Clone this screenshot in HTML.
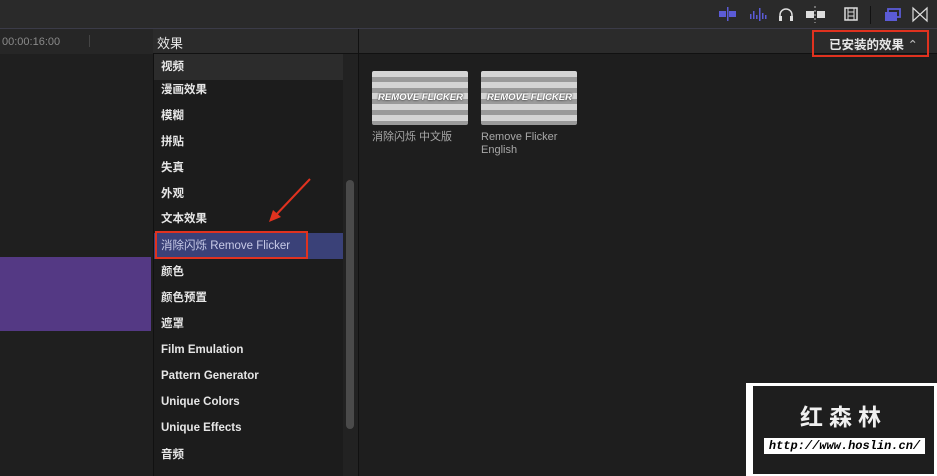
<!DOCTYPE html>
<html><head><meta charset="utf-8"><style>
*{margin:0;padding:0;box-sizing:border-box}
body{width:937px;height:476px;overflow:hidden;background:#1e1e1e;font-family:"Liberation Sans","Noto Sans CJK SC",sans-serif;position:relative;color:#ddd}
.abs{position:absolute}
#top{left:0;top:0;width:937px;height:29px;background:#2a2a2a;border-bottom:1px solid #3b3b48}
#left{left:0;top:29px;width:153px;height:447px;background:#1f1f1f}
#tc{left:0;top:29px;width:153px;height:25px;background:#262626;font-size:11px;color:#8a8a8a;padding:7px 0 0 2px}
#clip{left:0;top:257px;width:151px;height:74px;background:#543984}
#side{left:153px;top:29px;width:205px;height:447px;background:#1c1c1c;border-left:1px solid #111}
#hdr{left:153px;top:29px;width:784px;height:25px;background:#2b2b2b;border-bottom:1px solid #111}
.row{position:absolute;left:154px;width:189px;height:26px;font-size:11.5px;color:#e6e6e6;padding-left:7px;line-height:27px;font-weight:bold}
.sel{background:#3a4178;color:#c8cbe8;font-weight:normal}
.th{position:absolute;top:71px;width:96px;height:54px;border-radius:2px;background:repeating-linear-gradient(180deg,#d4d4d4 0 6px,#9a9a9a 6px 11px);overflow:hidden}
.th span{position:absolute;left:6px;top:21px;font:italic bold 9.5px "Liberation Sans",sans-serif;color:#fff;white-space:nowrap;text-shadow:0 0 2px #000}
.lbl{position:absolute;top:131px;font-size:11px;color:#a8a8a8;line-height:13px}
</style></head><body>
<div id="top" class="abs"></div>
<svg class="abs" style="left:717px;top:6px" width="220" height="18">
<rect x="2" y="5" width="7" height="6" fill="#5b5bd6"/><rect x="12" y="5" width="7" height="6" fill="#5b5bd6"/><rect x="10" y="1" width="1.5" height="14" fill="#5b5bd6"/>
<g fill="#5b5bd6"><rect x="33" y="8" width="1.5" height="5"/><rect x="36" y="5" width="1.5" height="8"/><rect x="39" y="9" width="1.5" height="4"/><rect x="42" y="2" width="1.5" height="13"/><rect x="45" y="7" width="1.5" height="6"/><rect x="48" y="9" width="1.5" height="4"/></g>
<path d="M63 14 V9 a6 6 0 0 1 12 0 V14" stroke="#ddd" stroke-width="1.5" fill="none"/><rect x="62" y="10" width="3" height="5" fill="#ddd"/><rect x="73" y="10" width="3" height="5" fill="#ddd"/>
<rect x="89" y="5" width="8" height="7" fill="#ddd"/><rect x="100" y="5" width="8" height="7" fill="#ddd"/><path d="M98 0 V17" stroke="#bbb" stroke-dasharray="2 2"/>
<rect x="128" y="2" width="12" height="12" fill="none" stroke="#ddd" stroke-width="1.5"/><path d="M131 2V14M137 2V14M131 6H137M131 10H137" stroke="#ddd"/>
<rect x="153" y="-6" width="1" height="30" fill="#111"/>
<rect x="171" y="3" width="12" height="8" fill="none" stroke="#5b5bd6" stroke-width="1.8"/><rect x="168" y="6" width="12" height="9" fill="#5b5bd6"/>
<path d="M196 2 V15 L210 2 V15 Z" stroke="#ddd" stroke-width="1.2" fill="none"/>
</svg>
<div id="left" class="abs"></div>
<div id="tc" class="abs">00:00:16:00</div>
<div class="abs" style="left:89px;top:35px;width:1px;height:12px;background:#444"></div>
<div id="clip" class="abs"></div>
<div id="side" class="abs"></div>
<div id="hdr" class="abs"></div>
<div class="abs" style="left:358px;top:29px;width:1px;height:447px;background:#111"></div>
<div class="abs" style="left:157px;top:33px;font-size:13px;color:#e8e8e8">效果</div>
<div class="abs" style="left:812px;top:30px;width:117px;height:27px;border:2px solid #e0321f"></div>
<div class="abs" style="left:829px;top:34px;font-size:12.5px;color:#e8e8e8;font-weight:bold">已安装的效果 <span style="font-weight:normal;color:#bbb">⌃</span></div>
<div class="row" style="top:54px;height:26px;background:#2c2c2c">视频</div>
<div class="row" style="top:80px;height:20px;line-height:21px">漫画效果</div>
<div class="row" style="top:103px">模糊</div>
<div class="row" style="top:129px">拼贴</div>
<div class="row" style="top:155px">失真</div>
<div class="row" style="top:181px">外观</div>
<div class="row" style="top:206px">文本效果</div>
<div class="row sel" style="top:233px">消除闪烁 Remove Flicker</div>
<div class="row" style="top:259px">颜色</div>
<div class="row" style="top:285px">颜色预置</div>
<div class="row" style="top:311px">遮罩</div>
<div class="row" style="top:337px">Film Emulation</div>
<div class="row" style="top:363px">Pattern Generator</div>
<div class="row" style="top:389px">Unique Colors</div>
<div class="row" style="top:415px">Unique Effects</div>
<div class="row" style="top:442px">音频</div>
<div class="abs" style="left:343px;top:54px;width:15px;height:422px;background:#222"></div>
<div class="abs" style="left:346px;top:180px;width:8px;height:249px;border-radius:4px;background:#4a4a4a"></div>
<div class="abs" style="left:155px;top:231px;width:153px;height:28px;border:2px solid #e0321f"></div>
<svg class="abs" style="left:265px;top:175px" width="50" height="50"><path d="M45 4 L9 42" stroke="#e0321f" stroke-width="2"/><path d="M4 47 L8 35 L16 42 Z" fill="#e0321f"/></svg>
<div class="th" style="left:372px"><span>REMOVE FLICKER</span></div>
<div class="th" style="left:481px"><span>REMOVE FLICKER</span></div>
<div class="lbl" style="left:372px">消除闪烁 中文版</div>
<div class="lbl" style="left:481px">Remove Flicker<br>English</div>
<div class="abs" style="left:746px;top:383px;width:191px;height:93px;background:#fff"></div>
<div class="abs" style="left:753px;top:386px;width:181px;height:88px;background:#1e1e1e"></div>
<div class="abs" style="left:753px;top:398px;width:181px;text-align:center;font-size:23px;font-weight:bold;color:#f0f0f0;letter-spacing:6px">红森林</div>
<div class="abs" style="left:764px;top:438px;width:161px;height:16px;background:#fff;color:#000;font:italic bold 12px 'Liberation Mono',monospace;text-align:center;line-height:16px">http://www.hoslin.cn/</div>
</body></html>
